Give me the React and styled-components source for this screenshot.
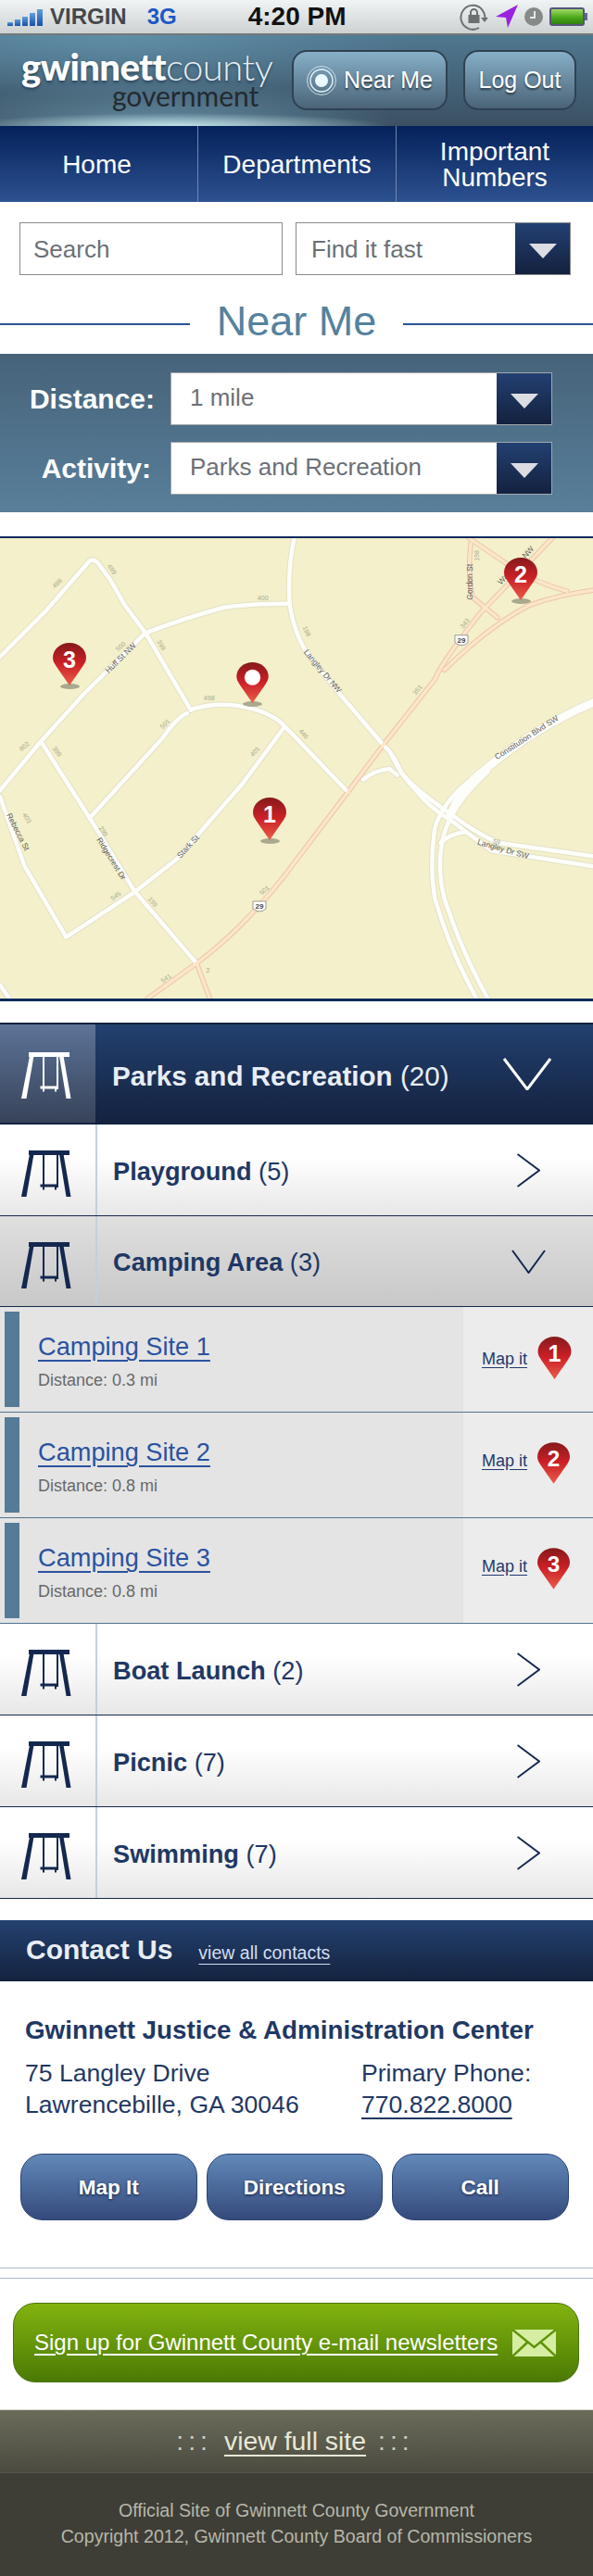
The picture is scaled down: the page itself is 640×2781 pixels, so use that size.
import React from 'react'
import styled, { createGlobalStyle } from 'styled-components'

const GlobalStyle = createGlobalStyle`
html, body { margin: 0; padding: 0; background: #fff; }
body { font-family: "Liberation Sans", Arial, sans-serif; }
* { box-sizing: border-box; }
a { color: inherit; }
`

const Page = styled.div`
width: 640px;
height: 2781px;
overflow: hidden;
background: #fff;
`

/* status bar */
const StatusBar = styled.div`
height: 38px;
display: flex;
align-items: center;
padding-left: 8px;
background: linear-gradient(#f0f4f5, #cdd1d2);
border-bottom: 2px solid #74787a;
position: relative;
`
const Signal = styled.div`
display: flex;
align-items: flex-end;
gap: 2px;
width: 38px;
height: 19px;
margin-top: 1px;
`
const SignalBar = styled.i`
display: block;
width: 6px;
height: ${({ $h }) => $h}px;
background: linear-gradient(#5ea0dc, #1a4fa8);
`
const Carrier = styled.span`
font: bold 24px "Liberation Sans", sans-serif;
color: #45484a;
margin-left: 8px;
`
const NetType = styled.span`
font: bold 24px "Liberation Sans", sans-serif;
color: #1b57c6;
margin-left: 22px;
`
const Clock = styled.span`
font: bold 28px "Liberation Sans", sans-serif;
color: #111;
margin-left: 77px;
`
const StatusIcons = styled.div`
display: flex;
align-items: center;
margin-left: auto;
padding-right: 6px;
gap: 7px;
`

/* header */
const Header = styled.header`
height: 98px;
display: flex;
align-items: flex-start;
position: relative;
background:
  radial-gradient(ellipse 230px 14px at 190px 100%, rgba(205, 235, 240, 0.9), rgba(205, 235, 240, 0) 100%),
  radial-gradient(ellipse 260px 50px at 170px 100%, rgba(120, 170, 190, 0.65), rgba(120, 170, 190, 0) 100%),
  radial-gradient(ellipse 320px 70px at 130px 0%, rgba(110, 160, 185, 0.55), rgba(110, 160, 185, 0) 100%),
  linear-gradient(#4f7890, #3b5062);
`
const Logo = styled.div`
width: 315px;
padding: 15px 0 0 23px;
display: flex;
flex-direction: column;
color: #fff;
`
const LogoTop = styled.div`
font: 40px/38px Lato, sans-serif;
letter-spacing: -0.6px;
white-space: nowrap;
text-shadow: 0 2px 3px rgba(20, 40, 60, 0.6);
b { font-weight: 900; }
span { font-weight: 300; letter-spacing: -0.5px; color: #e6eef2; }
`
const LogoSub = styled.div`
font: 400 30px/24px Lato, sans-serif;
color: #232a30;
margin-left: 98px;
`
const HeadButton = styled.div`
width: ${({ $w }) => $w}px;
height: 65px;
margin-top: 16px;
margin-right: ${({ $mr }) => $mr}px;
border: 2px solid #2f4152;
border-radius: 16px;
background: linear-gradient(#86b0c8, #4b6376);
display: flex;
align-items: center;
justify-content: center;
gap: 8px;
color: #fff;
font-size: 25px;
text-shadow: 0 2px 2px rgba(20, 30, 40, 0.7);
`

/* nav */
const Nav = styled.nav`
height: 82px;
display: grid;
grid-template-columns: 213px 214px 213px;
background: linear-gradient(#04215a, #2d5290);
`
const NavItem = styled.div`
display: flex;
align-items: center;
justify-content: center;
text-align: center;
color: #fff;
font-size: 28px;
line-height: 28px;
padding: 2px ${({ $first }) => ($first ? 4 : 0)}px 0 0;
border-left: ${({ $first }) => ($first ? 'none' : '1px solid #6f88ac')};
`

/* search */
const SearchRow = styled.div`
display: flex;
gap: 14px;
padding: 22px 25px 0 21px;
`
const Field = styled.div`
flex: ${({ $w }) => `0 0 ${$w}px`};
height: 57px;
display: flex;
align-items: center;
border: 1.5px solid ${({ $light }) => ($light ? '#a3a8ac' : '#8a8a8a')};
background: #fff;
color: #6b7077;
font-size: 26px;
padding-left: ${({ $pad }) => $pad}px;
`
const FieldText = styled.span`
margin-top: ${({ $shift }) => $shift}px;
`
const ArrowBox = styled.div`
margin-left: auto;
width: 59px;
align-self: stretch;
background: linear-gradient(#234072, #13213e);
display: flex;
align-items: center;
justify-content: center;
&::after {
  content: '';
  display: block;
  border-left: 15px solid transparent;
  border-right: 15px solid transparent;
  border-top: 16px solid #dcdde2;
  margin-top: 4px;
}
`

/* heading */
const Heading = styled.div`
margin-top: 21px;
height: 64px;
display: flex;
align-items: center;
justify-content: center;
gap: 29px;
color: #55829e;
font-size: 45px;
line-height: 46px;
&::before, &::after {
  content: '';
  flex: 1;
  height: 2px;
  background: #2b5297;
}
`
const HeadingText = styled.span`
margin-top: -6px;
`

/* filter panel */
const FilterPanel = styled.div`
height: 171px;
padding: 20px 44px 0 0;
background: linear-gradient(#46637a, #597f9a);
display: flex;
flex-direction: column;
gap: 18px;
`
const FilterRow = styled.div`
display: flex;
align-items: center;
`
const FilterLabel = styled.div`
width: 167px;
margin-right: 17px;
padding-right: ${({ $pr }) => $pr}px;
text-align: right;
color: #fff;
font-weight: bold;
font-size: 30px;
`

/* map */
const MapFrame = styled.div`
margin-top: 26px;
height: 502px;
border-top: 2px solid #0c2a5c;
border-bottom: 3px solid #0c2a5c;
background: #f3f0cb;
position: relative;
overflow: hidden;
svg.roads { display: block; }
`
const PinSpot = styled.div`
position: absolute;
left: ${({ $x }) => $x}px;
top: ${({ $y }) => $y}px;
width: ${({ $w }) => $w}px;
height: ${({ $h }) => $h}px;
svg { display: block; position: relative; }
&::before {
  content: '';
  position: absolute;
  left: 50%;
  bottom: -4px;
  width: 21px;
  height: 6px;
  margin-left: -10.5px;
  border-radius: 50%;
  background: #a9a98f;
}
`

/* accordion */
const Accordion = styled.div`
margin-top: 23px;
`
const SectionHead = styled.div`
height: 110px;
display: flex;
align-items: stretch;
border-top: 2px solid #14223f;
border-bottom: 2px solid #14223f;
background: linear-gradient(#22406f, #14223f);
color: #e8edf5;
`
const HeadIcon = styled.div`
width: 103px;
padding: 30px 0 0 23px;
background: linear-gradient(#5c7398, #374359);
color: #fff;
flex: none;
`
const HeadTitle = styled.div`
display: flex;
align-items: center;
padding: 5px 0 0 18px;
font-size: 29.6px;
font-weight: bold;
white-space: pre;
span { font-weight: normal; }
`
const Row = styled.div`
height: ${({ $h }) => $h || 99}px;
display: flex;
align-items: stretch;
border-bottom: 1px solid #16284c;
background: ${({ $open }) => ($open
    ? 'linear-gradient(#dfdfdf, #c8c8c8)'
    : 'linear-gradient(#fff 35%, #e7e7e7)')};
color: #1f3864;
`
const RowIcon = styled.div`
width: 105px;
flex: none;
padding: 28px 0 0 23px;
border-right: 2px solid #c2d1dc;
color: #14284f;
`
const RowTitle = styled.div`
display: flex;
align-items: center;
padding: 3px 0 0 17px;
font-size: 27.2px;
font-weight: bold;
white-space: pre;
span { font-weight: normal; }
`
const Chevron = styled.div`
margin-left: auto;
padding-right: ${({ $right }) => $right}px;
display: flex;
align-items: center;
`

const SiteRow = styled.div`
height: 114px;
display: flex;
border-bottom: 1px solid #4f7390;
background: #ececec;
`
const SiteMain = styled.div`
width: 500px;
flex: none;
background: #e4e4e4;
padding: 5px 0 5px 5px;
display: flex;
`
const SiteBar = styled.div`
width: 16px;
background: #567b96;
`
const SiteText = styled.div`
padding: 22px 0 0 20px;
`
const SiteName = styled.a`
display: block;
color: #2a52a0;
font-size: 27.2px;
line-height: 32px;
text-decoration: underline;
text-decoration-thickness: 1.5px;
text-underline-offset: 5px;
`
const SiteDistance = styled.div`
margin-top: 9px;
color: #686868;
font-size: 18px;
line-height: 22px;
`
const SiteMap = styled.div`
flex: 1;
display: flex;
align-items: flex-start;
padding: 32px 0 0 20px;
gap: 11px;
`
const MapLink = styled.a`
margin-top: ${({ $top }) => $top}px;
color: #1f3a6e;
font-size: 18px;
line-height: 22px;
text-decoration: underline;
text-underline-offset: 3px;
`

/* contact */
const ContactBar = styled.div`
margin-top: 23px;
height: 66px;
display: flex;
align-items: baseline;
padding: 16px 0 0 28px;
background: linear-gradient(#24416f, #14223f);
`
const ContactTitle = styled.div`
color: #e8edf5;
font-weight: bold;
font-size: 30px;
line-height: 32px;
`
const ContactLink = styled.a`
margin-left: 28px;
color: #d3dff2;
font-size: 19.5px;
text-decoration: underline;
text-underline-offset: 5px;
`
const ContactBody = styled.div`
padding: 36px 0 0 27px;
color: #1f3864;
`
const Office = styled.div`
font-weight: bold;
font-size: 27.8px;
line-height: 34px;
white-space: nowrap;
`
const AddressRow = styled.div`
margin-top: 12px;
display: flex;
font-size: 26.6px;
line-height: 34px;
`
const Address = styled.div`
width: 363px;
flex: none;
`
const PhoneLink = styled.a`
color: #1f3864;
text-decoration: underline;
text-decoration-thickness: 2px;
text-underline-offset: 5px;
`
const ButtonRow = styled.div`
display: flex;
gap: 10px;
margin: 36px 0 0 22px;
`
const ActionButton = styled.div`
width: 190.5px;
height: 72px;
display: flex;
align-items: center;
justify-content: center;
padding-top: 2px;
border: 1.5px solid #2b4273;
border-radius: 24px;
background: linear-gradient(#6189b9, #354a7c);
color: #fff;
font-weight: bold;
font-size: 22.5px;
text-shadow: 0 1px 3px rgba(10, 20, 50, 0.8);
`
const DoubleRule = styled.div`
margin-top: 51px;
height: 12px;
border-top: 1px solid #abb8cc;
border-bottom: 1px solid #abb8cc;
`
const Signup = styled.div`
margin: 26px 15px 0 14px;
height: 86px;
display: flex;
align-items: center;
padding-left: 22px;
border: 1.5px solid #4b720a;
border-radius: 24px;
background: linear-gradient(#82b30f, #4a7a04);
color: #fff;
font-size: 24px;
`
const SignupText = styled.a`
text-decoration: underline;
text-decoration-thickness: 1.5px;
text-underline-offset: 4px;
`
const MailIcon = styled.svg`
margin-left: 16px;
flex: none;
`

/* footer */
const ViewBar = styled.div`
margin-top: 29px;
height: 68px;
display: flex;
align-items: center;
justify-content: center;
padding-right: 3px;
background: linear-gradient(#6b6b5b, #4b4b40);
border-top: 1px solid #d8d8d0;
color: #e8e8d8;
font-size: 28.4px;
`
const Dots = styled.span`
letter-spacing: 5px;
color: #cfcfc0;
margin: ${({ $side }) => ($side === 'left' ? '0 13px 0 0' : '0 0 0 13px')};
`
const FullSite = styled.a`
text-decoration: underline;
text-decoration-thickness: 2px;
text-underline-offset: 5px;
`
const Footer = styled.footer`
height: 112px;
padding-top: 26px;
background: #3e3e36;
border-top: 1px solid #55554a;
color: #b7b7aa;
font-size: 19.6px;
line-height: 28px;
text-align: center;
`

const SwingIcon = () => (
    <svg width="54" height="50" viewBox="0 0 54 50" fill="currentColor">
        <rect x="8" y="0" width="44" height="5" />
        <path d="M9 4h4.5L5.5 50H0z" />
        <path d="M41 4h4.5l8 46h-5z" />
        <rect x="23" y="4" width="2" height="36" />
        <rect x="38" y="4" width="2" height="36" />
        <rect x="20.5" y="36.5" width="19.5" height="3" />
        <rect x="23" y="39" width="2" height="3.5" />
        <rect x="36" y="39" width="2" height="3.5" />
    </svg>
)

const ChevronRight = () => (
    <svg width="25" height="37" viewBox="0 0 25 37" fill="none" stroke="#14284f" strokeWidth="2">
        <path d="M0.5 1 L24 18.5 L0.5 36" />
    </svg>
)

const ChevronDown = ({ w, h, color, sw }) => (
    <svg width={w} height={h} viewBox={`0 0 ${w} ${h}`} fill="none" stroke={color} strokeWidth={sw}>
        <path d={`M1 1 L${w / 2} ${h - 1} L${w - 1} 1`} />
    </svg>
)

const Pin = ({ id, label, w = 36, h = 46 }) => (
    <svg width={w} height={h} viewBox="0 0 36 46">
        <defs>
            <linearGradient id={id} x1="0" y1="0" x2="0" y2="1">
                <stop offset="0" stopColor="#861a1c" />
                <stop offset="0.48" stopColor="#cb1f26" />
                <stop offset="1" stopColor="#ea5e4a" />
            </linearGradient>
        </defs>
        <path
            d="M18 46 L3.5 25 C1 21 0 19 0 16 C0 7 8 0 18 0 C28 0 36 7 36 16 C36 19 35 21 32.5 25 Z"
            fill={`url(#${id})`}
        />
        {label
            ? <text x="18" y="27" textAnchor="middle" fill="#fff" fontFamily="Liberation Sans" fontWeight="bold" fontSize="25">{label}</text>
            : <circle cx="18" cy="17" r="9" fill="#fff" />}
    </svg>
)

// roads are written in the crop's coordinates, 2.45 across and 3 down
const toMap = (d) => d.replace(/(-?\d+) (-?\d+)/g, (m, x, y) => `${(x / 2.45).toFixed(1)} ${((y - 33) / 3).toFixed(1)}`)

const whiteRoads = [
    'M-10 430 L120 270 L236 108 Q245 98 258 112 L290 165 L330 250 L385 340 L505 590',
    'M380 345 L220 540 L105 695 L0 850',
    'M385 340 Q480 295 590 258 Q650 245 765 245',
    'M778 33 Q760 130 766 250 Q780 350 815 410 L900 540 L1015 705 Q1040 730 1060 790 Q1090 840 1190 925 Q1260 990 1320 1020 L1580 1065',
    'M1035 735 Q1060 800 1100 850 Q1130 900 1190 945 Q1260 1010 1300 1045 L1580 1098',
    'M505 588 Q590 555 680 590 Q730 610 755 645 L920 855',
    'M495 600 Q470 610 430 680 L240 935',
    'M752 645 L640 830 L540 970 L470 1070 L355 1180 L175 1325 L65 1095 L0 870',
    'M110 695 L240 945 L355 1175 L520 1410',
    'M0 1480 L25 1524',
    'M960 815 Q990 785 1030 780 L1050 800',
    'M1260 1524 Q1190 1370 1150 1200 Q1135 1100 1150 970 Q1170 890 1240 820',
    'M1290 1524 Q1220 1370 1175 1200 Q1155 1100 1170 1010 Q1190 900 1290 790',
    'M1165 1020 Q1190 990 1230 985',
]

const orangeRoads = [
    'M390 1524 L520 1410 Q640 1300 750 1130 L920 855 L1015 700 L1150 490 Q1165 440 1270 275 L1460 33',
    'M1175 460 Q1290 320 1400 250 Q1480 215 1580 200',
    'M520 1410 L555 1524',
    'M1240 33 L1345 120 Q1420 180 1500 205',
    'M1245 50 Q1235 150 1250 225 L1315 290',
]

const roadLabels = [
    ['Huff St NW', 320, 422, -45], ['Ridgecrest Dr', 293, 1072, 58], ['Stark St', 498, 1033, -47],
    ['Rebecca St', 46, 985, 63], ['Langley Dr NW', 852, 465, 50], ['Gordon St', 1245, 175, -90],
    ['Constitution Blvd SW', 1393, 680, -33], ['Langley Dr SW', 1330, 1042, 16], ['Wayne St NW', 1365, 122, -47],
]

const addressLabels = [
    ['488', 152, 180, -45], ['499', 295, 135, 55], ['400', 695, 228, 0], ['198', 810, 335, 65],
    ['500', 320, 385, -40], ['399', 425, 380, 60], ['498', 553, 553, 0], ['501', 437, 635, -45],
    ['446', 802, 668, 50], ['401', 675, 725, -50], ['802', 65, 708, -40], ['399', 150, 725, 55],
    ['403', 70, 940, 60], ['299', 272, 983, 55], ['545', 307, 1193, -35], ['199', 403, 1212, 50],
    ['501', 700, 1175, -40], ['541', 440, 1460, -35], ['2', 550, 1435, 0], ['351', 1105, 525, -50],
    ['343', 1230, 310, -50], ['198', 1262, 90, -90], ['59', 1313, 1018, 10],
]

const MapLabel = ({ text, x, y, rot, color, size }) => {
    const px = (x / 2.45).toFixed(1)
    const py = ((y - 33) / 3).toFixed(1)
    return (
        <text x={px} y={py} transform={`rotate(${rot} ${px} ${py})`} textAnchor="middle" dominantBaseline="middle"
            fontFamily="Liberation Sans" fontSize={size} fill={color}>{text}</text>
    )
}

const Shield = ({ x, y }) => (
    <g transform={`translate(${(x / 2.45).toFixed(1)} ${((y - 33) / 3).toFixed(1)})`}>
        <path d="M-7 -5 H7 V3 Q4 6 0 6 Q-4 6 -7 3Z" fill="#fff" stroke="#9a9a90" strokeWidth="1" />
        <text x="0" y="3" textAnchor="middle" fontFamily="Liberation Sans" fontWeight="bold" fontSize="8" fill="#444">29</text>
    </g>
)

const RoadMap = () => (
    <svg className="roads" width="640" height="497" viewBox="0 0 640 497">
        <g fill="none" strokeLinejoin="round" strokeLinecap="round">
            {whiteRoads.map((d, i) => <path key={`c${i}`} d={toMap(d)} stroke="#e5e1c6" strokeWidth="6.5" />)}
            <path d={toMap('M1580 560 Q1420 640 1280 785 Q1220 840 1190 930')} stroke="#e5e1c6" strokeWidth="10" />
            {orangeRoads.map((d, i) => <path key={`o${i}`} d={toMap(d)} stroke="#efc4a4" strokeWidth="5.5" />)}
            {whiteRoads.map((d, i) => <path key={`w${i}`} d={toMap(d)} stroke="#fdfdfa" strokeWidth="4.5" />)}
            <path d={toMap('M1580 560 Q1420 640 1280 785 Q1220 840 1190 930')} stroke="#fdfdfa" strokeWidth="8.5" />
            {orangeRoads.map((d, i) => <path key={`f${i}`} d={toMap(d)} stroke="#fbe6cb" strokeWidth="3.5" />)}
        </g>
        {roadLabels.map(([t, x, y, r]) => <MapLabel key={t} text={t} x={x} y={y} rot={r} color="#5c5c58" size="8.5" />)}
        {addressLabels.map(([t, x, y, r], i) => <MapLabel key={i} text={t} x={x} y={y} rot={r} color="#a9aa8e" size="7" />)}
        <Shield x={1220} y={362} />
        <Shield x={686} y={1224} />
    </svg>
)

const subRows = [
    { name: 'Playground', count: 5 },
]
const lowerRows = [
    { name: 'Boat Launch', count: 2 },
    { name: 'Picnic', count: 7 },
    { name: 'Swimming', count: 7 },
]
const sites = [
    { name: 'Camping Site 1', dist: '0.3 mi', n: '1', linkTop: 13, pinW: 37, pinH: 46 },
    { name: 'Camping Site 2', dist: '0.8 mi', n: '2', linkTop: 9, pinW: 35, pinH: 45 },
    { name: 'Camping Site 3', dist: '0.8 mi', n: '3', linkTop: 9, pinW: 35, pinH: 45 },
]

const CategoryRow = ({ name, count }) => (
    <Row>
        <RowIcon><SwingIcon /></RowIcon>
        <RowTitle>{name} <span>({count})</span></RowTitle>
        <Chevron $right={57}><ChevronRight /></Chevron>
    </Row>
)

const App = () => {
    return (
        <Page>
            <GlobalStyle />
            <StatusBar>
                <Signal>
                    {[4, 7, 10, 14, 18].map((h) => <SignalBar key={h} $h={h} />)}
                </Signal>
                <Carrier>VIRGIN</Carrier>
                <NetType>3G</NetType>
                <Clock>4:20 PM</Clock>
                <StatusIcons>
                    <svg width="32" height="30" viewBox="0 0 32 30" fill="none">
                        <path d="M27 19 A13 13 0 1 0 21 27" stroke="#6c7070" strokeWidth="2" />
                        <path d="M23 16 h8 l-4 5z" fill="#6c7070" />
                        <rect x="9.5" y="13" width="12" height="9" fill="#6c7070" />
                        <path d="M12 13 v-2.5 a3.5 3.5 0 0 1 7 0 V13" stroke="#6c7070" strokeWidth="2" />
                    </svg>
                    <svg width="24" height="26" viewBox="0 0 24 26">
                        <path d="M24 0 L13 25 L11 14 L0 13 Z" fill="#9a22e0" />
                    </svg>
                    <svg width="20" height="20" viewBox="0 0 20 20">
                        <circle cx="10" cy="10" r="10" fill="#868a88" />
                        <path d="M11 4 V11 H6" fill="none" stroke="#e6e8e8" strokeWidth="2" />
                    </svg>
                    <svg width="41" height="20" viewBox="0 0 41 20">
                        <defs>
                            <linearGradient id="batt" x1="0" y1="0" x2="0" y2="1">
                                <stop offset="0" stopColor="#a8e070" />
                                <stop offset="0.55" stopColor="#4aa818" />
                                <stop offset="1" stopColor="#2e7a10" />
                            </linearGradient>
                        </defs>
                        <rect x="1" y="1" width="36" height="18" rx="2" fill="url(#batt)" stroke="#55557a" strokeWidth="2" />
                        <rect x="38" y="6" width="3" height="8" fill="#66668a" />
                    </svg>
                </StatusIcons>
            </StatusBar>

            <Header>
                <Logo>
                    <LogoTop><b>gwinnett</b><span>county</span></LogoTop>
                    <LogoSub>government</LogoSub>
                </Logo>
                <HeadButton $w={168} $mr={17}>
                    <svg width="32" height="32" viewBox="0 0 32 32" fill="none" stroke="#dff2fa">
                        <circle cx="16" cy="16" r="15.5" strokeWidth="0.8" />
                        <circle cx="16" cy="16" r="12" strokeWidth="1.4" />
                        <circle cx="16" cy="16" r="7" fill="#eafaff" stroke="none" />
                    </svg>
                    Near Me
                </HeadButton>
                <HeadButton $w={122} $mr={0}>Log Out</HeadButton>
            </Header>

            <Nav>
                <NavItem $first>Home</NavItem>
                <NavItem>Departments</NavItem>
                <NavItem>Important<br />Numbers</NavItem>
            </Nav>

            <SearchRow>
                <Field $w={284} $pad={14}><FieldText $shift={2}>Search</FieldText></Field>
                <Field $w={297} $pad={16}><FieldText $shift={2}>Find it fast</FieldText><ArrowBox /></Field>
            </SearchRow>

            <Heading><HeadingText>Near Me</HeadingText></Heading>

            <FilterPanel>
                <FilterRow>
                    <FilterLabel>Distance:</FilterLabel>
                    <Field $w={412} $pad={20} $light><FieldText $shift={-2}>1 mile</FieldText><ArrowBox /></Field>
                </FilterRow>
                <FilterRow>
                    <FilterLabel $pr={4}>Activity:</FilterLabel>
                    <Field $w={412} $pad={20} $light><FieldText $shift={-2}>Parks and Recreation</FieldText><ArrowBox /></Field>
                </FilterRow>
            </FilterPanel>

            <MapFrame>
                <RoadMap />
                <PinSpot $x={57} $y={113} $w={36} $h={46}><Pin id="mp3" label="3" /></PinSpot>
                <PinSpot $x={544} $y={21} $w={36} $h={46}><Pin id="mp2" label="2" /></PinSpot>
                <PinSpot $x={273} $y={280} $w={36} $h={46}><Pin id="mp1" label="1" /></PinSpot>
                <PinSpot $x={255} $y={134} $w={35} $h={44}><Pin id="mp0" w={35} h={44} /></PinSpot>
            </MapFrame>

            <Accordion>
                <SectionHead>
                    <HeadIcon><SwingIcon /></HeadIcon>
                    <HeadTitle>Parks and Recreation <span>(20)</span></HeadTitle>
                    <Chevron $right={45}><ChevronDown w={52} h={35} color="#fff" sw={3} /></Chevron>
                </SectionHead>
                {subRows.map((r) => <CategoryRow key={r.name} {...r} />)}
                <Row $open $h={98}>
                    <RowIcon><SwingIcon /></RowIcon>
                    <RowTitle>Camping Area <span>(3)</span></RowTitle>
                    <Chevron $right={51}><ChevronDown w={37} h={26} color="#14284f" sw={2} /></Chevron>
                </Row>
                {sites.map((s) => (
                    <SiteRow key={s.n}>
                        <SiteMain>
                            <SiteBar />
                            <SiteText>
                                <SiteName>{s.name}</SiteName>
                                <SiteDistance>Distance: {s.dist}</SiteDistance>
                            </SiteText>
                        </SiteMain>
                        <SiteMap>
                            <MapLink $top={s.linkTop}>Map it</MapLink>
                            <Pin id={`lp${s.n}`} label={s.n} w={s.pinW} h={s.pinH} />
                        </SiteMap>
                    </SiteRow>
                ))}
                {lowerRows.map((r) => <CategoryRow key={r.name} {...r} />)}
            </Accordion>

            <ContactBar>
                <ContactTitle>Contact Us</ContactTitle>
                <ContactLink>view all contacts</ContactLink>
            </ContactBar>
            <ContactBody>
                <Office>Gwinnett Justice &amp; Administration Center</Office>
                <AddressRow>
                    <Address>75 Langley Drive<br />Lawrencebille, GA 30046</Address>
                    <div>Primary Phone:<br /><PhoneLink>770.822.8000</PhoneLink></div>
                </AddressRow>
            </ContactBody>
            <ButtonRow>
                <ActionButton>Map It</ActionButton>
                <ActionButton>Directions</ActionButton>
                <ActionButton>Call</ActionButton>
            </ButtonRow>
            <DoubleRule />
            <Signup>
                <SignupText>Sign up for Gwinnett County e-mail newsletters</SignupText>
                <MailIcon width="47" height="29" viewBox="0 0 47 29">
                    <rect width="47" height="29" fill="#d6eea2" />
                    <path d="M0 0 L23.5 19 L47 0 M0 29 L17 13 M47 29 L30 13" fill="none" stroke="#5f9208" strokeWidth="2.5" />
                </MailIcon>
            </Signup>
            <ViewBar>
                <Dots $side="left">:::</Dots>
                <FullSite>view full site</FullSite>
                <Dots $side="right">:::</Dots>
            </ViewBar>
            <Footer>
                Official Site of Gwinnett County Government<br />
                Copyright 2012, Gwinnett County Board of Commissioners
            </Footer>
        </Page>
    )
}

export default App
